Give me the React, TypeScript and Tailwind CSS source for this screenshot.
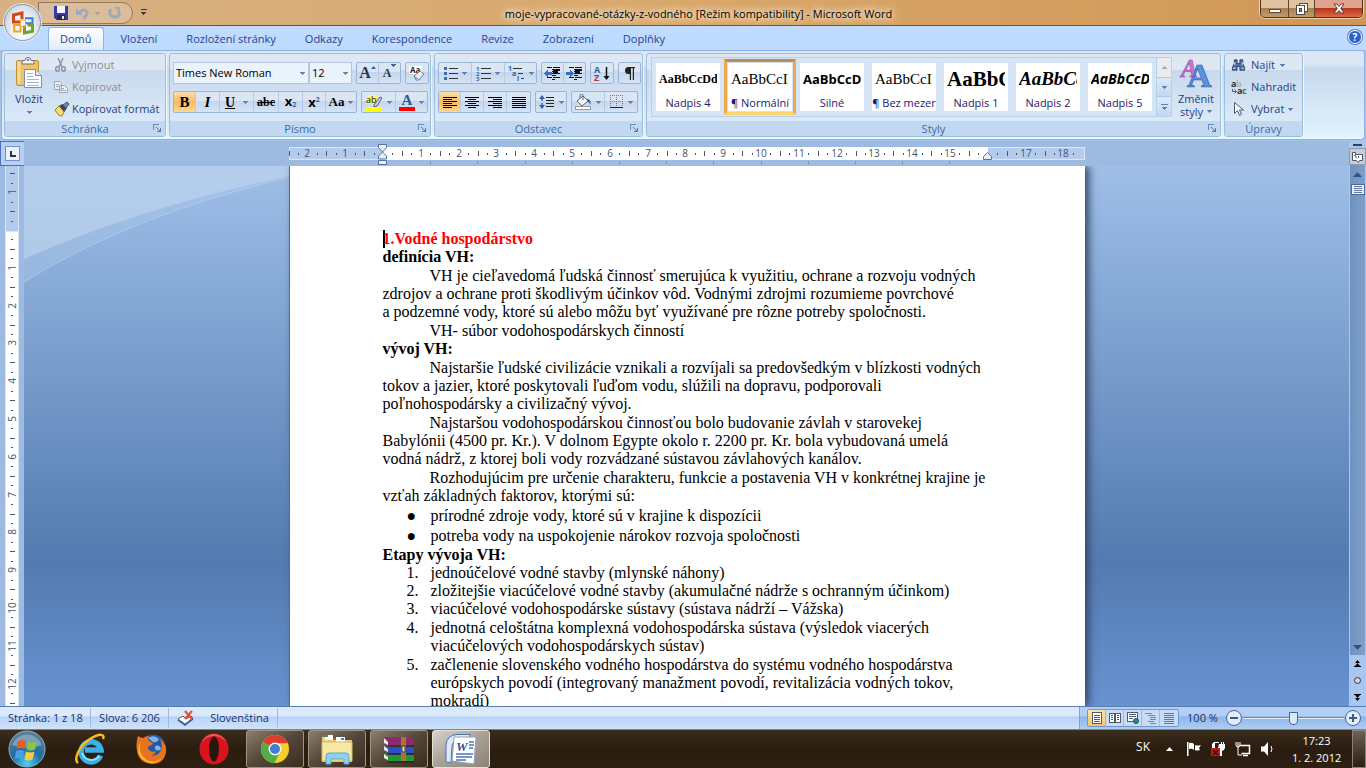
import type { ReactNode } from 'react';

const UI = "font-['Open_Sans','Noto_Sans',sans-serif]";
const SERIF = "font-['Liberation_Serif',serif]";

const TABS = ['Domů', 'Vložení', 'Rozložení stránky', 'Odkazy', 'Korespondence', 'Revize', 'Zobrazení', 'Doplňky'];

const STYLES = [
  { name: 'Nadpis 4',   sample: 'AaBbCcDd', look: "font-['Liberation_Serif',serif] font-bold text-[12px]" },
  { name: '¶ Normální', sample: 'AaBbCcI',  look: "font-['Liberation_Serif',serif] text-[15px]" },
  { name: 'Silné',      sample: 'AaBbCcD',  look: "font-['Open_Sans',sans-serif] font-bold text-[13px]" },
  { name: '¶ Bez mezer', sample: 'AaBbCcI', look: "font-['Liberation_Serif',serif] text-[15px]" },
  { name: 'Nadpis 1',   sample: 'AaBbCc',   look: "font-['Liberation_Serif',serif] font-bold text-[21px]" },
  { name: 'Nadpis 2',   sample: 'AaBbCc',   look: "font-['Liberation_Serif',serif] font-bold italic text-[19px]" },
  { name: 'Nadpis 5',   sample: 'AaBbCcD',  look: "font-['Open_Sans',sans-serif] font-bold italic text-[14px]" },
];

function Caret({ className = 'fill-[#6181b0]' }: { className?: string }) {
  return (
    <svg width="5" height="3" viewBox="0 0 5 3" shapeRendering="crispEdges" className={`shrink-0 ${className}`}>
      <path d="M0 0h5v1H4v1H3v1H2V2H1V1H0z" />
    </svg>
  );
}

/* ---------- ribbon pieces ---------- */

function Launcher({ label }: { label: string }) {
  return (
    <button type="button" aria-label={label} className="absolute right-1 bottom-1">
      <svg width="8" height="8" viewBox="0 0 8 8" shapeRendering="crispEdges" fill="none" stroke="#668eb8">
        <path d="M.5 6V.5H6" />
        <path d="M3 3l4 4M7.5 3.500V7.500H3.500" stroke="#54779f" />
      </svg>
    </button>
  );
}

function Group({ title, width, launcher = true, children }: { title: string; width: string; launcher?: boolean; children: ReactNode }) {
  return (
    <section
      aria-label={title}
      className={`relative flex h-[84px] shrink-0 flex-col overflow-hidden rounded-[3px] border border-[#9dbfdb] bg-linear-to-b from-[#dee8f5] from-20% via-[#c9d9ed] via-20% to-[#d9e9f8] to-80% shadow-[1px_1px_0_#eef6fd] ${width}`}
    >
      <div className="min-h-0 flex-1">{children}</div>
      <div className="h-[15px] bg-[#c1d8f0] text-center text-[11px] leading-[16px] text-[#3e6aaa]">{title}</div>
      {launcher && <Launcher label={`${title} – možnosti`} />}
    </section>
  );
}

function Cluster({ children }: { children: ReactNode }) {
  return (
    <div className="flex h-[22px] divide-x divide-[#b3cbe8] rounded-[2px] border border-[#9ab5d8] bg-linear-to-b from-[#dbe6f4] from-45% via-[#c4d6ed] via-45% to-[#d5e4f5]">
      {children}
    </div>
  );
}

function Tool({ label, width, active = false, caret = false, children }: { label: string; width: string; active?: boolean; caret?: boolean; children: ReactNode }) {
  return (
    <button
      type="button"
      aria-label={label}
      aria-pressed={active}
      className={`flex h-5 items-center justify-center gap-1 ${width} ${active ? 'bg-linear-to-b from-[#fbdfae] via-[#fbb860] to-[#fdd98f]' : ''}`}
    >
      {children}
      {caret && <Caret />}
    </button>
  );
}

function Lines({ rows }: { rows: [number, number][] }) {
  return (
    <svg width="14" height="11" viewBox="0 0 14 11" shapeRendering="crispEdges" stroke="#000">
      {rows.map(([x1, x2], i) => (
        <path key={i} d={`M${x1} ${i * 2 + 0.5}H${x2}`} />
      ))}
    </svg>
  );
}

function IndentIcon({ right = false }: { right?: boolean }) {
  return (
    <svg width="17" height="13" viewBox="0 0 17 13" shapeRendering="crispEdges">
      <path d="M3 .5h5M9 .5h7M8 2.500h8M8 4.500h6M8 6.500h8M8 8.500h4M3 10.500h5M9 10.500h7M8 12.500h3" stroke="#111" />
      <path d="M9 3.500h7M9 5.500h5" stroke="#111" />
      <path d={right ? 'M0 5h4V3l4 3.500L4 10V8H0z' : 'M8 5H4V3L0 6.500 4 10V8h4z'} fill="#3a6fc0" />
    </svg>
  );
}

function Clipboard() {
  return (
    <div className="flex h-full text-[11px] text-[#1e3f7d]">
      <button type="button" className="flex w-12 shrink-0 flex-col items-center pt-[3px]">
        <svg width="28" height="32" viewBox="0 0 28 32">
          <rect x="1.500" y="3.500" width="22" height="25" rx="1.500" fill="#f0c168" stroke="#c28f36" />
          <path d="M2.500 27V5h3v22z" fill="#f8d993" />
          <path d="M7 7V3.500h3a3 3 0 0 1 6 0h3V7z" fill="#eef1f6" stroke="#6c7480" />
          <circle cx="13" cy="3" r="1" fill="#5d6673" />
          <path d="M9.500 12.500h11l6 6v12h-17z" fill="#fdfeff" stroke="#7b8da8" />
          <path d="M20.500 12.500v6h6" fill="#dbe6f4" stroke="#7b8da8" />
          <path d="M12 16.500h6M12 19.500h6M12 22.500h12M12 25.500h12M12 28.500h12" stroke="#9fb4d1" />
        </svg>
        <span className="mt-[2px] leading-4">Vložit</span>
        <span className="mt-1"><Caret /></span>
      </button>
      <div className="flex flex-col pl-px">
        <button type="button" disabled className="flex h-[22px] items-center gap-[2px] text-[#8d8d8d]">
          <svg width="16" height="16" viewBox="0 0 16 16" fill="none" stroke="#8795a9">
            <path d="M4 1l4 9M9 1L5 10" strokeWidth="1.500" />
            <ellipse cx="3.500" cy="12" rx="1.800" ry="2.200" strokeWidth="1.500" />
            <ellipse cx="9.500" cy="12" rx="1.800" ry="2.200" strokeWidth="1.500" />
          </svg>
          Vyjmout
        </button>
        <button type="button" disabled className="flex h-[22px] items-center gap-[2px] text-[#8d8d8d]">
          <svg width="16" height="16" viewBox="0 0 16 16" fill="#edf1f6" stroke="#9aa5b5">
            <path d="M.5 2.500h5l2 2v6h-7zM5.500 6.500h5l3 3v4h-8z" />
            <path d="M2 5.500h3M2 7.500h3M7 9.500h3M7 11.500h5" />
          </svg>
          Kopírovat
        </button>
        <button type="button" className="flex h-[22px] items-center gap-[2px]">
          <svg width="16" height="16" viewBox="0 0 16 16">
            <path d="M1 9l4-4 6 4-3 6-3-.5z" fill="#f4dc74" stroke="#a48424" />
            <path d="M5 5l3-2 5 4-3 4z" fill="#3e4656" />
            <path d="M9 4l4-3 2 2-3 4z" fill="#7486b4" stroke="#3d4d7c" />
          </svg>
          <span className="whitespace-nowrap">Kopírovat formát</span>
        </button>
      </div>
    </div>
  );
}

function FontTools() {
  return (
    <div className="flex flex-col gap-[7px] px-[3px] pt-2">
      <div className="flex gap-1">
        <div className="flex h-[22px]">
          <label className="relative flex items-center">
            <select aria-label="Písmo" className="h-[22px] w-[136px] appearance-none border border-[#b3c7e1] bg-[#eaf2fb] pl-[2px] text-[11px] text-black">
              <option>Times New Roman</option>
            </select>
            <span className="pointer-events-none absolute right-1"><Caret /></span>
          </label>
          <label className="relative flex items-center">
            <select aria-label="Velikost písma" className="h-[22px] w-[43px] appearance-none border border-[#b3c7e1] bg-[#eaf2fb] pl-[2px] text-[11px] text-black">
              <option>12</option>
            </select>
            <span className="pointer-events-none absolute right-1"><Caret /></span>
          </label>
        </div>
        <Cluster>
          <Tool label="Zvětšit písmo" width="w-[22px]">
            <span className={`${SERIF} flex text-[16px] leading-4 font-bold text-[#23374f]`}>
              A<svg width="5" height="3" viewBox="0 0 5 3" className="mt-px fill-[#2f62b5]"><path d="M2.500 0L5 3H0z" /></svg>
            </span>
          </Tool>
          <Tool label="Zmenšit písmo" width="w-[21px]">
            <span className={`${SERIF} flex text-[12px] leading-5 font-bold text-[#23374f]`}>
              A<Caret className="mt-px fill-[#2f62b5]" />
            </span>
          </Tool>
        </Cluster>
        <Cluster>
          <Tool label="Vymazat formátování" width="w-[22px]">
            <svg width="18" height="16" viewBox="0 0 18 16" className="overflow-visible">
              <rect x="1" y="1" width="13" height="8" fill="#fff" />
              <text x="2" y="8" fontSize="8" fontWeight="bold" fontFamily="Open Sans" fill="#222">Aa</text>
              <path d="M6 11l6-5 4 3-5 6H8z" fill="#e9eef7" stroke="#6c7fa2" />
              <path d="M6 11l4 3" stroke="#6c7fa2" />
            </svg>
          </Tool>
        </Cluster>
      </div>
      <div className="flex gap-1">
        <Cluster>
          <Tool label="Tučné" width="w-[22px]" active><span className={`${SERIF} text-[15px] font-bold`}>B</span></Tool>
          <Tool label="Kurzíva" width="w-[24px]"><span className={`${SERIF} text-[15px] font-bold italic`}>I</span></Tool>
          <Tool label="Podtržené" width="w-[34px]" caret><span className={`${SERIF} pr-1 text-[14px] font-bold underline`}>U</span></Tool>
          <Tool label="Přeškrtnuté" width="w-[25px]"><span className={`${SERIF} text-[12px] font-bold line-through`}>abc</span></Tool>
          <Tool label="Dolní index" width="w-[24px]">
            <span className="flex text-[13px] leading-4 font-bold">x<span className="pt-[6px] text-[7px] leading-3 text-[#2f62b5]">2</span></span>
          </Tool>
          <Tool label="Horní index" width="w-[23px]">
            <span className="flex text-[13px] leading-4 font-bold">x<span className="text-[7px] leading-3 text-[#2f62b5]">2</span></span>
          </Tool>
          <Tool label="Velká písmena" width="w-[30px]" caret><span className={`${SERIF} text-[13px] font-bold`}>Aa</span></Tool>
        </Cluster>
        <Cluster>
          <Tool label="Barva zvýraznění textu" width="w-[34px]" caret>
            <svg width="17" height="17" viewBox="0 0 17 17" className="overflow-visible">
              <rect x="1" y="1" width="10" height="9" fill="#fff36b" />
              <text x="0" y="9" fontSize="9" fontFamily="Open Sans" fill="#111">ab</text>
              <path d="M8 11l6-8 2 1-5 8-3 1z" fill="#c9d3e4" stroke="#4f5f7c" />
              <rect x="0" y="13" width="16" height="4" fill="#ff0" />
            </svg>
          </Tool>
          <Tool label="Barva písma" width="w-[31px]" caret>
            <span className="flex flex-col items-center">
              <span className={`${SERIF} text-[15px] leading-[13px] font-bold text-[#31558f]`}>A</span>
              <span className="h-1 w-4 bg-[#f00]" />
            </span>
          </Tool>
        </Cluster>
      </div>
    </div>
  );
}

function ParagraphTools() {
  return (
    <div className="flex flex-col gap-[7px] px-[3px] pt-2">
      <div className="flex gap-1">
        <Cluster>
          <Tool label="Odrážky" width="w-[33px]" caret>
            <svg width="14" height="13" viewBox="0 0 14 13" shapeRendering="crispEdges">
              <path d="M0 0h3v3H0zM0 5h3v3H0zM0 10h3v3H0z" fill="#4068b0" />
              <path d="M5 1.500h9M5 6.500h9M5 11.500h9" stroke="#333" />
            </svg>
          </Tool>
          <Tool label="Číslování" width="w-[33px]" caret>
            <svg width="15" height="15" viewBox="0 0 15 15" className="overflow-visible">
              <g fontSize="6" fontWeight="bold" fontFamily="Open Sans" fill="#2f62b5">
                <text x="0" y="5">1</text><text x="0" y="10">2</text><text x="0" y="15">3</text>
              </g>
              <path d="M5 2.500h10M5 7.500h10M5 12.500h10" stroke="#333" shapeRendering="crispEdges" />
            </svg>
          </Tool>
          <Tool label="Víceúrovňový seznam" width="w-[31px]" caret>
            <svg width="17" height="15" viewBox="0 0 17 15" className="overflow-visible">
              <g fontSize="7" fontWeight="bold" fontFamily="Open Sans" fill="#2f62b5">
                <text x="0" y="5">1</text><text x="4" y="10">a</text><text x="9" y="15">i</text>
              </g>
              <path d="M5 2.500h9M10 7.500h5M13 12.500h3" stroke="#333" shapeRendering="crispEdges" />
            </svg>
          </Tool>
        </Cluster>
        <Cluster>
          <Tool label="Zmenšit odsazení" width="w-[22px]"><IndentIcon /></Tool>
          <Tool label="Zvětšit odsazení" width="w-[21px]"><IndentIcon right /></Tool>
        </Cluster>
        <Cluster>
          <Tool label="Seřadit" width="w-[22px]">
            <svg width="16" height="17" viewBox="0 0 16 17" className="overflow-visible">
              <text x="0" y="8" fontSize="9" fontWeight="bold" fontFamily="Open Sans" fill="#2f62b5">A</text>
              <text x="0" y="16" fontSize="9" fontWeight="bold" fontFamily="Open Sans" fill="#a33a4a">Z</text>
              <path d="M12.500 2v12" stroke="#111" strokeWidth="1.500" /><path d="M9.500 11h6l-3 4z" fill="#111" />
            </svg>
          </Tool>
        </Cluster>
        <Cluster>
          <Tool label="Zobrazit vše" width="w-[21px]">
            <svg width="11" height="13" viewBox="0 0 11 13" fill="#222">
              <path d="M5 0h6v1.200H10V13H8.800V1.200H7V13H5.800V7H4.500a3.500 3.500 0 0 1 0-7z" />
            </svg>
          </Tool>
        </Cluster>
      </div>
      <div className="flex gap-1">
        <Cluster>
          <Tool label="Zarovnat vlevo" width="w-[22px]" active><Lines rows={[[0, 14], [0, 9], [0, 14], [0, 9], [0, 14], [0, 9]]} /></Tool>
          <Tool label="Na střed" width="w-[23px]"><Lines rows={[[0, 14], [3, 11], [0, 14], [3, 11], [0, 14], [3, 11]]} /></Tool>
          <Tool label="Zarovnat vpravo" width="w-[23px]"><Lines rows={[[0, 14], [5, 14], [0, 14], [5, 14], [0, 14], [5, 14]]} /></Tool>
          <Tool label="Do bloku" width="w-[23px]"><Lines rows={[[0, 14], [0, 14], [0, 14], [0, 14], [0, 14], [0, 14]]} /></Tool>
        </Cluster>
        <Cluster>
          <Tool label="Řádkování" width="w-[30px]" caret>
            <svg width="16" height="16" viewBox="0 0 16 16">
              <path d="M3 1l3 4H0zM3 15l3-4H0z" fill="#2f62b5" /><path d="M3 4v3M3 9v3" stroke="#2f62b5" strokeWidth="1.500" />
              <path d="M7 3.500h8M7 6.500h8M7 9.500h8M7 12.500h8" stroke="#222" shapeRendering="crispEdges" />
            </svg>
          </Tool>
        </Cluster>
        <Cluster>
          <Tool label="Stínování" width="w-[33px]" caret>
            <svg width="17" height="16" viewBox="0 0 17 16">
              <path d="M2 7l6-5 5 5-6 5z" fill="#f6f8fb" stroke="#536483" />
              <path d="M8 6V1.500a1.500 1.500 0 0 0-3 0V4" fill="none" stroke="#536483" />
              <path d="M12 5c3 0 4 2 3.500 6-1-2-1.500-3-3-3z" fill="#3366b8" />
              <rect x=".5" y="12.500" width="15" height="3" fill="#fff" stroke="#9a9a9a" />
            </svg>
          </Tool>
          <Tool label="Ohraničení" width="w-[32px]" caret>
            <svg width="14" height="14" viewBox="0 0 14 14" shapeRendering="crispEdges" fill="none" stroke="#777" strokeDasharray="1 1">
              <path d="M0 .5h13M.5 0v13M12.500 0v13M6.500 0v13M0 6.500h13" />
              <path d="M0 12.500h13" stroke="#222" strokeDasharray="none" />
            </svg>
          </Tool>
        </Cluster>
      </div>
    </div>
  );
}

function StyleGallery() {
  return (
    <div className="flex pt-[3px] pl-1">
      <div className="flex h-[60px] shrink-0 border border-[#b9d0ed] bg-[#d6e5f6]">
        {STYLES.map((s, i) => {
          const active = i === 1;
          return (
            <button
              key={s.name}
              type="button"
              aria-pressed={active}
              className={`my-px flex w-[72px] shrink-0 rounded-[2px] border-[3px] ${active ? 'border-t-[#c28a4e] border-r-[#efa94a] border-b-[#f8d66c] border-l-[#efa94a]' : 'border-transparent'}`}
            >
              <span className="mx-px my-px flex h-[48px] w-16 flex-col bg-white">
                <span className={`mx-[3px] block h-8 overflow-hidden text-left leading-8 whitespace-nowrap text-black ${s.look}`}>{s.sample}</span>
                <span className="text-center text-[11px] leading-[15px] whitespace-nowrap text-[#1b1b70]">{s.name}</span>
              </span>
            </button>
          );
        })}
        <div className="flex w-[15px] flex-col border-l border-[#b9d0ed]">
          <button type="button" aria-label="Předchozí řádek" className="flex flex-1 items-center justify-center bg-[#e9ebee]">
            <span className="rotate-180"><Caret className="fill-[#a9acb1]" /></span>
          </button>
          <button type="button" aria-label="Další řádek" className="flex flex-1 items-center justify-center border-y border-[#a9c4e5] bg-linear-to-b from-[#dce9f8] to-[#c3d8f1]"><Caret /></button>
          <button type="button" aria-label="Více" className="flex flex-1 flex-col items-center justify-center gap-[2px] bg-linear-to-b from-[#dce9f8] to-[#c3d8f1]">
            <span className="h-px w-[7px] bg-[#6181b0]" /><Caret />
          </button>
        </div>
      </div>
      <button type="button" className="flex flex-1 flex-col items-center pt-px text-[11px] leading-[13px] text-[#1e3f7d]">
        <svg width="32" height="31" viewBox="0 0 32 31" className="overflow-visible">
          <text x="1" y="19" fontSize="25" fontStyle="italic" fontWeight="bold" fontFamily="Liberation Serif" fill="#c978cf" stroke="#8b3f9b" strokeWidth=".5">A</text>
          <text x="7" y="29" fontSize="34" fontFamily="Liberation Serif" fontWeight="bold" fill="#5b93dc" stroke="#2e62ad" strokeWidth=".7">A</text>
        </svg>
        <span className="mt-[3px]">Změnit</span>
        <span className="flex items-center gap-1">styly<Caret /></span>
      </button>
    </div>
  );
}

function Editing() {
  return (
    <div className="flex flex-col pl-[6px] text-[11px] text-[#1e3f7d]">
      <button type="button" className="flex h-[22px] items-center gap-[5px]">
        <svg width="15" height="14" viewBox="0 0 16 14" fill="#4d6fa6" stroke="#26446f">
          <path d="M3.500 1.500h3v4h3v-4h3v4l2 4v3h-5v-4h-3v4h-5v-3l2-4z" />
          <path d="M2 10.500h3M11 10.500h3M4 4v3M12 4v3" stroke="#d8e4f4" />
        </svg>
        Najít <Caret />
      </button>
      <button type="button" className="flex h-[22px] items-center gap-1">
        <svg width="16" height="16" viewBox="0 0 16 16" fontFamily="Open Sans" fontWeight="bold" fontSize="9" className="overflow-visible">
          <text x="0" y="8" fill="#333">a</text><text x="5" y="8" fill="#aab2bd">b</text>
          <text x="6" y="15" fill="#333">a</text><text x="11" y="15" fill="#2d8a34">c</text>
          <path d="M1.500 10v2.500H5M3.500 10.500l2 2-2 2" fill="none" stroke="#2f62b5" />
        </svg>
        Nahradit
      </button>
      <button type="button" className="flex h-[22px] items-center gap-1">
        <svg width="16" height="16" viewBox="0 0 16 16"><path d="M3.500 1.500v11l3-3 2 5 2-1-2-4.500h4z" fill="#fff" stroke="#4a5a76" /></svg>
        Vybrat <Caret />
      </button>
    </div>
  );
}

/* ---------- window chrome ---------- */

function OfficeButton() {
  return (
    <button type="button" aria-label="Tlačítko Office" className="absolute top-1 left-1 z-10 flex size-[37px] items-center justify-center rounded-full border border-[#8e9aae] bg-radial-[at_50%_75%] from-white via-[#e9ecf2] to-[#b9c2d2] shadow-[0_0_0_1px_#dfe6f2]">
      <svg width="24" height="24" viewBox="0 0 24 24" fill="none" strokeWidth="3">
        <path d="M9.500 11H2.500V4L11 2v6" stroke="#d2491b" />
        <path d="M14 7.200h7.500v5H15" stroke="#3c7fd0" strokeWidth="2" />
        <path d="M9.500 14H3.200v6.500h6.300v-5" stroke="#efa51b" strokeWidth="2" />
        <path d="M13.500 14.500V22l8-1.700V14h-5" stroke="#6aa52c" />
        <path d="M9.500 9h5M14.500 9v6M9.500 9.500v6M10 15.500h5" stroke="#f0a13a" strokeWidth="1" />
      </svg>
    </button>
  );
}

function TitleBar() {
  return (
    <header className="flex h-[26px] shrink-0 items-start border-b border-[#6d5334] bg-linear-to-r from-[#d6b184] via-[#d9a769] to-[#cf9757]">
      <div className="flex items-start pt-[2px] pl-[38px]">
        <div className="flex h-[22px] w-[95px] items-center rounded-r-full border border-[#8f7a5f] bg-[#dbc3a4]/70 pl-[15px]">
          <button type="button" aria-label="Uložit">
            <svg width="14" height="14" viewBox="0 0 14 14" shapeRendering="crispEdges">
              <path d="M0 0h14v14H2l-2-2z" fill="#3a39a8" />
              <path d="M3 0h8v7H3z" fill="#f3f5fb" /><path d="M3 9h8v5H3z" fill="#222a55" /><path d="M8 10h2v3H8z" fill="#e5e8f2" />
            </svg>
          </button>
          <button type="button" aria-label="Zpět" className="ml-2 flex items-center gap-[6px]">
            <svg width="13" height="13" viewBox="0 0 13 13" fill="none" stroke="#9fa9bd" strokeWidth="3">
              <path d="M4 5c4-4 8-1 7 2-.5 2-2 3-4 4.500" /><path d="M0 1v7h7z" fill="#9fa9bd" stroke="none" />
            </svg>
            <Caret className="fill-[#a79f97]" />
          </button>
          <button type="button" aria-label="Znovu" className="ml-2">
            <svg width="13" height="13" viewBox="0 0 13 13" fill="none" stroke="#9fa9bd" strokeWidth="3">
              <path d="M3 2c-3 4 0 8 4 8 5 0 5-4 3-6" /><path d="M6 0h6v6z" fill="#9fa9bd" stroke="none" />
            </svg>
          </button>
        </div>
        <button type="button" aria-label="Přizpůsobit panel" className="mt-[7px] ml-[7px] flex w-[7px] flex-col items-center gap-[2px]">
          <span className="h-px w-[6px] bg-[#2b3c5c]" /><Caret className="fill-[#2b3c5c]" />
        </button>
      </div>
      <h1 className="flex-1 pr-[10px] text-center text-[11px] leading-[27px] text-black [text-shadow:0_0_6px_#fff,0_0_8px_#f8e6cc,0_0_12px_#f8e6cc]">
        moje-vypracované-otázky-z-vodného [Režim kompatibility] - Microsoft Word
      </h1>
      <div className="mr-[3px] flex h-[18px] overflow-hidden rounded-b-[5px] border border-t-0 border-[#4e3624] shadow-[0_0_0_1px_#e9cda5]">
        <button type="button" aria-label="Minimalizovat" className="flex w-[28px] items-end justify-center border-r border-[#5c4630] bg-linear-to-b from-[#dfc3a1] from-50% via-[#a8804f] via-50% to-[#c49a68] pb-1">
          <span className="h-1 w-3 border border-[#4e4a48] bg-white" />
        </button>
        <button type="button" aria-label="Obnovit" className="flex w-[26px] items-center justify-center border-r border-[#5c4630] bg-linear-to-b from-[#dfc3a1] from-50% via-[#a8804f] via-50% to-[#c49a68]">
          <svg width="12" height="12" viewBox="0 0 12 12" fill="#fff" stroke="#4e4a48" shapeRendering="crispEdges">
            <path d="M3.500.5h8v8h-8z" /><path d="M.5 2.500h8v9h-8z" /><path d="M3.500 5.500h2v3h-2z" fill="#a8804f" />
          </svg>
        </button>
        <button type="button" aria-label="Zavřít" className="flex w-[47px] items-center justify-center bg-linear-to-b from-[#e0a18d] from-50% via-[#b8341a] via-50% to-[#dc6a43]">
          <svg width="12" height="11" viewBox="0 0 12 11">
            <path d="M1 1h3l2 2.500L8 1h3L7.800 5.500 11 10H8L6 7.500 4 10H1l3.200-4.500z" fill="#fff" stroke="#5b3a36" />
          </svg>
        </button>
      </div>
    </header>
  );
}

function TabRow() {
  return (
    <nav className="flex h-6 shrink-0 items-end bg-[#bfdbff] pl-12">
      {TABS.map((t, i) => (
        <button
          key={t}
          type="button"
          className={`h-[23px] shrink-0 px-[11px] text-[11px] leading-[22px] text-[#1e4395] ${i === 0 ? 'mr-[6px] rounded-t-[3px] border border-b-0 border-[#8db2e3] bg-linear-to-b from-white to-[#e0ebf9]' : 'mr-[7px]'}`}
        >
          {t}
        </button>
      ))}
      <button type="button" aria-label="Nápověda" className="mr-1 mb-[6px] ml-auto flex size-[14px] items-center justify-center rounded-full border border-white bg-[#2c62d0] text-[10px] leading-none font-bold text-white shadow-[0_0_0_1px_#5a7fc4]">
        ?
      </button>
    </nav>
  );
}

function Ribbon() {
  return (
    <div className="flex h-[91px] shrink-0 bg-[#a5c3e8] px-px pb-px">
      <div className="flex flex-1 gap-[3px] rounded-[4px] border border-[#8db2e3] bg-linear-to-b from-[#dbe7f5] from-15% via-[#c8d9ee] via-20% to-[#e2f3fd] pt-[2px] pl-[2px] shadow-[inset_0_-2px_0_#e4f8ff]">
        <Group title="Schránka" width="w-[162px]"><Clipboard /></Group>
        <Group title="Písmo" width="w-[262px]"><FontTools /></Group>
        <Group title="Odstavec" width="w-[209px]"><ParagraphTools /></Group>
        <Group title="Styly" width="w-[575px]"><StyleGallery /></Group>
        <Group title="Úpravy" width="w-[79px]" launcher={false}><Editing /></Group>
      </div>
    </div>
  );
}

/* ---------- rulers ---------- */

const CM = 37.8;

function HorizontalRuler() {
  const zero = 94;
  const ticks = [];
  for (let q = -10; q <= 74; q++) {
    const x = Math.round(zero + (q * CM) / 4);
    const n = Math.abs(q / 4);
    if (x < 0 || x > 792 || q === 0 || n === 16) continue;
    if (q % 4 === 0) ticks.push(<text key={q} x={x} y="16" textAnchor="middle">{n}</text>);
    else if (q % 2 === 0) ticks.push(<path key={q} d={`M${x}.5 10v5`} />);
    else ticks.push(<path key={q} d={`M${x}.5 12v2`} />);
  }
  return (
    <svg width="796" height="25" viewBox="0 0 796 25" className="mx-auto block" fontSize="10" fontFamily="Open Sans" fill="#44546d">
      <rect x=".5" y="6.500" width="795" height="12" fill="#b4cbeb" stroke="#d7e6f8" />
      <rect x="94" y="6" width="605" height="13" fill="#fff" />
      <g stroke="#4c566b" strokeWidth="1" shapeRendering="crispEdges" className="[&_text]:stroke-none">{ticks}</g>
      <g stroke="#7d93b5" shapeRendering="crispEdges">
        {Array.from({ length: 12 }, (_, i) => <path key={i} d={`M${Math.round(zero + (i + 1) * 47.2)}.5 20v3`} />)}
      </g>
      <g fill="#e8f0fa" stroke="#5472a3">
        <path d="M89.500 3.500h8v3l-4 4.500-4-4.500zM93.500 11l4 4v3h-8v-3zM89.500 19.500h8v4h-8z" />
        <path d="M698.500 11.500l4 4v3h-8v-3z" />
      </g>
    </svg>
  );
}

function VerticalRuler() {
  const zero = 64;
  const marks = [];
  for (let q = -6; q <= 50; q++) {
    const y = Math.round(zero + (q * CM) / 4);
    if (q === 0 || y > 540) continue;
    if (q % 4 === 0) marks.push(<text key={q} transform={`translate(16 ${y}) rotate(-90)`} textAnchor="middle">{Math.abs(q / 4)}</text>);
    else if (q % 2 === 0) marks.push(<path key={q} d={`M10 ${y}.5h5`} />);
    else marks.push(<path key={q} d={`M11 ${y}.5h2`} />);
  }
  return (
    <svg width="24" height="540" viewBox="0 0 24 540" className="block" fontSize="10" fontFamily="Open Sans" fill="#44546d">
      <rect x="5" y="0" width="14" height="540" fill="#d7e6f8" />
      <rect x="6" y="0" width="12" height="65" fill="#b4cbeb" />
      <rect x="6" y="66" width="12" height="474" fill="#fff" />
      <g stroke="#4c566b" shapeRendering="crispEdges" className="[&_text]:stroke-none">{marks}</g>
    </svg>
  );
}

/* ---------- document ---------- */

function Para({ children }: { children: ReactNode }) {
  return <p className="mt-px indent-[47px]">{children}</p>;
}

function Item({ marker, className = '', children }: { marker: string; className?: string; children: ReactNode }) {
  return (
    <li className={`flex pl-6 ${className}`}>
      <span className="w-6 shrink-0">{marker}</span>
      <span>{children}</span>
    </li>
  );
}

function Page() {
  return (
    <article className={`relative mx-auto h-full w-[796px] border-l border-[#5b6b82] bg-white pt-16 pl-[93px] text-[16px] leading-[18px] whitespace-nowrap text-black shadow-[4px_0_8px_#33496b] ${SERIF}`}>
      <h2 className="font-bold text-[#f00]">
        <span className="-mr-[2px] inline-block h-[18px] w-[2px] bg-black align-top" />1.Vodné hospodárstvo
      </h2>
      <h3 className="font-bold">definícia VH:</h3>
      <Para>
        VH je cieľavedomá ľudská činnosť smerujúca k využitiu, ochrane a rozvoju vodných<br />
        zdrojov a ochrane proti škodlivým účinkov vôd. Vodnými zdrojmi rozumieme povrchové<br />
        a podzemné vody, ktoré sú alebo môžu byť využívané pre rôzne potreby spoločnosti.
      </Para>
      <Para>VH- súbor vodohospodárskych činností</Para>
      <h3 className="font-bold">vývoj VH:</h3>
      <Para>
        Najstaršie ľudské civilizácie vznikali a rozvíjali sa predovšedkým v blízkosti vodných<br />
        tokov a jazier, ktoré poskytovali ľuďom vodu, slúžili na dopravu, podporovali<br />
        poľnohospodársky a civilizačný vývoj.
      </Para>
      <Para>
        Najstaršou vodohospodárskou činnosťou bolo budovanie závlah v starovekej<br />
        Babylónii (4500 pr. Kr.). V dolnom Egypte okolo r. 2200 pr. Kr. bola vybudovaná umelá<br />
        vodná nádrž, z ktorej boli vody rozvádzané sústavou závlahových kanálov.
      </Para>
      <Para>
        Rozhodujúcim pre určenie charakteru, funkcie a postavenia VH v konkrétnej krajine je<br />
        vzťah základných faktorov, ktorými sú:
      </Para>
      <ul className="mt-px leading-5">
        <Item marker="●">prírodné zdroje vody, ktoré sú v krajine k dispozícii</Item>
        <Item marker="●">potreba vody na uspokojenie nárokov rozvoja spoločnosti</Item>
      </ul>
      <h3 className="font-bold">Etapy vývoja VH:</h3>
      <ol>
        <Item marker="1.">jednoúčelové vodné stavby (mlynské náhony)</Item>
        <Item marker="2.">zložitejšie viacúčelové vodné stavby (akumulačné nádrže s ochranným účinkom)</Item>
        <Item marker="3.">viacúčelové vodohospodárske sústavy (sústava nádrží – Vážska)</Item>
        <Item marker="4." className="mt-px">
          jednotná celoštátna komplexná vodohospodárska sústava (výsledok viacerých<br />
          viacúčelových vodohospodárskych sústav)
        </Item>
        <Item marker="5." className="mt-px">
          začlenenie slovenského vodného hospodárstva do systému vodného hospodárstva<br />
          európskych povodí (integrovaný manažment povodí, revitalizácia vodných tokov,<br />
          mokradí)
        </Item>
      </ol>
    </article>
  );
}

function ScrollBar() {
  return (
    <aside className="flex w-[17px] shrink-0 flex-col items-center bg-[#a9c6f0] pt-[3px]">
      <div className="h-[2px] w-[9px] bg-[#2f4269]" />
      <button type="button" aria-label="Pravítko" className="mt-[2px] flex size-[17px] items-center justify-center border border-[#8f9bb0] bg-[#c9ccd3]">
        <svg width="13" height="12" viewBox="0 0 13 12" fill="#fff" stroke="#4a566d">
          <path d="M1.500 1.500h3v2h7v6h-3l-1 2-2-2h-4z" /><path d="M5 5v2M7.500 5v2M3 4l2 1" />
        </svg>
      </button>
      <div className="flex w-[15px] flex-1 flex-col items-center bg-linear-to-r from-[#6f92bf] to-[#7fa0cb]">
        <button type="button" aria-label="Nahoru" className="flex h-[19px] items-center">
          <svg width="9" height="5" viewBox="0 0 9 5" fill="#35507f"><path d="M4.500 0L9 5H0z" /></svg>
        </button>
        <div className="flex h-[11px] w-[14px] flex-col items-center justify-center gap-px border border-[#4f6c9a] bg-[#e6eef9]">
          {[0, 1, 2, 3].map((n) => <span key={n} className="h-px w-2 bg-[#6a7d9c]" />)}
        </div>
        <button type="button" aria-label="Dolů" className="mt-auto flex h-4 items-center">
          <svg width="9" height="5" viewBox="0 0 9 5" fill="#35507f"><path d="M0 0h9L4.500 5z" /></svg>
        </button>
      </div>
      <div className="flex h-[51px] flex-col items-center justify-around">
        <button type="button" aria-label="Předchozí stránka">
          <svg width="7" height="7" viewBox="0 0 7 7"><path d="M3.500 0L6 3H1zM3.500 3L6 6H1zM0 6h7v1H0z" /></svg>
        </button>
        <button type="button" aria-label="Vybrat objekt" className="size-[7px] rounded-full border border-[#333] bg-[#d5d5d5]" />
        <button type="button" aria-label="Další stránka">
          <svg width="7" height="7" viewBox="0 0 7 7"><path d="M0 0h7v1H0zM1 1h5L3.500 4zM1 4h5L3.500 7z" /></svg>
        </button>
      </div>
    </aside>
  );
}

function Workspace() {
  return (
    <main className="flex min-h-0 flex-1 bg-[#9dbae0]">
      <div className="flex w-6 shrink-0 flex-col overflow-hidden">
        <button type="button" aria-label="Tabulátor" className="flex size-[25px] shrink-0 items-center justify-center border border-[#4a72b8] bg-[#b7cff0]">
          <span className="flex size-[15px] items-center justify-center border border-[#7294c9] bg-[#eef3fa]">
            <span className="size-[6px] border-b-2 border-l-2 border-[#26344f]" />
          </span>
        </button>
        <VerticalRuler />
      </div>
      <div className="flex min-w-0 flex-1 flex-col">
        <HorizontalRuler />
        <div className="relative min-h-0 flex-1 overflow-hidden bg-linear-to-b from-[#9fbfe8] via-[#547bb0] via-73% to-[#6793d1]">
          <svg width="265" height="120" viewBox="0 0 265 120" className="absolute top-0 left-0">
            <path d="M0 0h265v11Q105 50 0 116z" fill="#b5d0ec" opacity=".3" />
            <path d="M0 0h265v10Q115 42 0 93z" fill="#c0d6f0" opacity=".6" />
            <path d="M265 11Q105 50 0 116" fill="none" stroke="#bcd4ee" opacity=".6" />
          </svg>
          <Page />
        </div>
      </div>
      <ScrollBar />
    </main>
  );
}

/* ---------- status bar ---------- */

function StatusBar() {
  return (
    <footer className="flex h-[23px] shrink-0 items-center border-t border-[#567db0] bg-linear-to-b from-[#dce9fb] from-40% via-[#b8d3f8] via-45% to-[#cfe2fb] text-[11px] text-[#14316d]">
      <button type="button" className="h-5 w-[91px] border-r border-[#9dbce3] text-left"><span className="pl-2">Stránka: 1 z 18</span></button>
      <button type="button" className="h-5 w-[78px] border-r border-[#9dbce3]">Slova: 6 206</button>
      <button type="button" aria-label="Kontrola pravopisu" className="flex w-[33px] justify-center">
        <svg width="17" height="16" viewBox="0 0 17 16">
          <path d="M1 9l5-3 3 3 5-3 2 2-8 6z" fill="#fff" stroke="#4a6390" /><path d="M1 10l7 5 8-6" fill="none" stroke="#345a9d" strokeWidth="1.500" />
          <path d="M8 1l7 8M15 1L8 9" stroke="#ea4b2c" strokeWidth="2" />
        </svg>
      </button>
      <button type="button" className="h-5 w-[76px] border-r border-[#9dbce3]">Slovenština</button>
      <div className="ml-auto flex h-full items-center border-l border-[#7fa5d8] bg-linear-to-b from-[#b3cff3] from-40% via-[#8fb5e8] via-45% to-[#b0cdf2] pl-[7px]">
        <div className="flex h-[18px] divide-x divide-[#9dbbe2] rounded-[2px] border border-[#6e97cf] bg-[#c7dcf6]">
          {['Rozložení při tisku', 'Čtení', 'Web', 'Osnova', 'Koncept'].map((v, i) => (
            <button key={v} type="button" aria-label={v} className={`flex w-[18px] items-center justify-center ${i === 0 ? 'bg-linear-to-b from-[#fde3ac] to-[#fbc35e]' : ''}`}>
              <svg width="12" height="12" viewBox="0 0 12 12" fill="none" stroke="#4f5a6c" shapeRendering="crispEdges">
                {i === 0 && <><path d="M1.500.5h9v11h-9z" fill="#fff" /><path d="M3 3.500h6M3 5.500h6M3 7.500h6M3 9.500h6" /></>}
                {i === 1 && <><path d="M.5 1.500h5v9h-5zM6.500 1.500h5v9h-5z" fill="#fff" /><path d="M2 3.500h2M2 5.500h2M2 7.500h2M8 3.500h2M8 5.500h2M8 7.500h2" /></>}
                {i === 2 && <><path d="M.5.5h10v9H.5z" fill="#fff" /><path d="M2 2.500h7M2 4.500h7M2 6.500h4" /><circle cx="9" cy="9" r="2.500" fill="#2c8a7a" stroke="#1d5a78" shapeRendering="auto" /></>}
                {i === 3 && <path stroke="#7b8594" d="M0 1.500h7M3 3.500h7M5 5.500h6M5 7.500h6M3 9.500h6M5 11.500h6" />}
                {i === 4 && <path stroke="#6b7687" d="M1 1.500h10M1 3.500h10M1 5.500h10M1 7.500h10M1 9.500h10M1 11.500h10" />}
              </svg>
            </button>
          ))}
        </div>
        <button type="button" className="w-[47px]">100 %</button>
        <button type="button" aria-label="Oddálit" className="flex size-4 items-center justify-center rounded-full border border-[#44669b] bg-[#e2edfb]">
          <span className="h-[2px] w-2 bg-[#44597c]" />
        </button>
        <input
          type="range"
          aria-label="Lupa"
          min={0}
          max={100}
          defaultValue={50}
          className="mx-px h-[14px] w-[101px] appearance-none bg-[linear-gradient(transparent_6px,#5d86bd_6px,#5d86bd_7px,#eaf3ff_7px,#eaf3ff_8px,transparent_8px)] [&::-webkit-slider-thumb]:h-[13px] [&::-webkit-slider-thumb]:w-[9px] [&::-webkit-slider-thumb]:appearance-none [&::-webkit-slider-thumb]:rounded-b-[4px] [&::-webkit-slider-thumb]:border [&::-webkit-slider-thumb]:border-[#44669b] [&::-webkit-slider-thumb]:bg-[#dce8f8]"
        />
        <button type="button" aria-label="Přiblížit" className="mr-[5px] flex size-4 items-center justify-center rounded-full border border-[#44669b] bg-[#e2edfb]">
          <svg width="8" height="8" viewBox="0 0 8 8" fill="#44597c"><path d="M3 0h2v3h3v2H5v3H3V5H0V3h3z" /></svg>
        </button>
      </div>
    </footer>
  );
}

/* ---------- taskbar ---------- */

const RUN = 'flex h-[38px] w-[58px] items-center justify-center rounded-[3px] border';

function TaskBar() {
  return (
    <div className="flex h-[39px] shrink-0 items-center border-t border-[#8b8273] bg-linear-to-b from-[#3a2d1d] via-[#2a1d10] to-[#2e2114] text-white">
      <button type="button" aria-label="Start" className="ml-2 flex w-[38px] justify-center">
        <svg width="38" height="38" viewBox="0 0 38 38">
          <defs>
            <radialGradient id="orb" cx=".5" cy=".9" r=".9">
              <stop offset="0" stopColor="#4fd2f4" /><stop offset=".45" stopColor="#1c6ea6" /><stop offset="1" stopColor="#5d7f95" />
            </radialGradient>
          </defs>
          <circle cx="19" cy="19" r="18" fill="url(#orb)" stroke="#8fb0bf" />
          <path d="M4 15a16 16 0 0 1 30 0q-15 6-30 0z" fill="#fff" opacity=".3" />
          <path d="M10 11q4-2 8 0l-1.500 8q-4-2-8 0z" fill="#ea5b25" />
          <path d="M20 11.500q4 2 9 0l-2 8q-4 2-8.500 0z" fill="#8cc63e" />
          <path d="M8 21q4-2 8 0l-1.500 8q-4-2-8 0z" fill="#4a9fe0" />
          <path d="M18 21.500q4 2 8.500 0l-2 8q-4 2-8 0z" fill="#fbcb3c" />
        </svg>
      </button>
      <button type="button" aria-label="Internet Explorer" className="flex w-[87px] justify-center">
        <svg width="32" height="32" viewBox="0 0 32 32" fill="none">
          <path d="M26.500 22.500A10 10 0 1 1 27 17H11" stroke="#38b0ea" strokeWidth="5.500" />
          <path d="M25.500 23A10 10 0 0 1 8 20" stroke="#8fe0fb" strokeWidth="2" />
          <path d="M4 30C-1 26 6 12 16 6S31 1 29 6" stroke="#f5c021" strokeWidth="2.500" />
        </svg>
      </button>
      <button type="button" aria-label="Firefox" className="flex w-[37px] justify-center">
        <svg width="32" height="32" viewBox="0 0 32 32">
          <circle cx="17" cy="14" r="12.500" fill="#28579f" />
          <path d="M12 5q6-4 11 1-2 4-6 3zM19 13q5-2 6 3-3 3-6 0z" fill="#7fb5e4" />
          <path d="M2 3q3 2 5 2 3-2 6-2-2 3 0 5 2 1 4 2-1 3-4 3-2 2 0 4 3 3 7 1-1 4-5 4 7 2 10-5 2-5-1-11 7 5 6 13-2 12-14 12Q3 30 1 18-.5 10 2 3z" fill="#e9721c" />
          <path d="M5 9Q1 20 11 27q8 4 16-3-5 7-13 6Q2 27 2 16q0-4 3-7z" fill="#f9b233" />
        </svg>
      </button>
      <button type="button" aria-label="Opera" className="flex w-[87px] justify-center">
        <svg width="30" height="32" viewBox="0 0 30 32">
          <ellipse cx="15" cy="16" rx="14.500" ry="15.500" fill="#d9141c" />
          <ellipse cx="15" cy="16" rx="5" ry="12.500" fill="#2a1510" />
          <path d="M3 9Q7 1 15 1q8 0 12 8-5-6-12-6T3 9z" fill="#f47b7b" opacity=".7" />
        </svg>
      </button>
      <div className="ml-[-11px] flex gap-1">
        <button type="button" aria-label="Chrome" className={`${RUN} border-[#a09480] bg-linear-to-br from-[#8b7f70] via-[#54473a] to-[#3a2d20]`}>
          <svg width="30" height="30" viewBox="0 0 30 30">
            <circle cx="15" cy="15" r="14" fill="#f6cf2c" />
            <path d="M15 15L2.900 8A14 14 0 0 1 27.800 9.200H15z" fill="#dc3d30" />
            <path d="M15 15L2.900 8A14 14 0 0 0 14.500 29L20 18z" fill="#4fae46" />
            <circle cx="15" cy="15" r="6.500" fill="#f4f6f8" /><circle cx="15" cy="15" r="5" fill="#3a7fd0" />
          </svg>
        </button>
        <button type="button" aria-label="Průzkumník" className={`${RUN} border-[#a09480] bg-linear-to-br from-[#8b7f70] via-[#54473a] to-[#3a2d20]`}>
          <svg width="32" height="32" viewBox="0 0 32 32">
            <path d="M1 4h10l2 3h18v22H1z" fill="#e9cf79" /><path d="M4 2h8v5H4zM15 4h9v5h-9z" fill="#fff" />
            <path d="M4 2h3v2H4z" fill="#3d9c46" /><path d="M12 5h3v2h-3z" fill="#d84a35" /><path d="M20 5h3v2h-3z" fill="#3a84cf" />
            <path d="M1 9h30v19H1z" fill="#f8e8a6" stroke="#d8b95c" />
            <path d="M5 31v-8q0-3 3-3h17q3 0 3 3v8h-5v-5H10v5z" fill="#8ed0ee" stroke="#5aa6cd" />
          </svg>
        </button>
        <button type="button" aria-label="WinRAR" className={`${RUN} border-[#a09480] bg-linear-to-br from-[#8b7f70] via-[#54473a] to-[#3a2d20]`}>
          <svg width="32" height="28" viewBox="0 0 32 28">
            <path d="M1 2h26l4 4v4H5L1 7z" fill="#8d2a6e" /><path d="M1 10l4 2h26v6H5l-4-3z" fill="#2b50c4" /><path d="M1 18l4 2h26v6H5l-4-3z" fill="#26953a" />
            <path d="M1 3l4 4v3L1 8zM1 11l4 3v3l-4-2zM1 19l4 3v3l-4-2z" fill="#efeae0" />
            <path d="M5 11h26M5 19h26M5 27h26" stroke="#161616" />
            <path d="M18 2h5v24h-5z" fill="#a9742d" /><path d="M19 11h3v6h-3z" fill="#f4e4b0" stroke="#333" />
          </svg>
        </button>
        <button type="button" aria-label="Word" className={`${RUN} border-[#e5e0d8] bg-linear-to-br from-[#d8d3cc] via-[#a89f95] to-[#8d8378]`}>
          <svg width="32" height="32" viewBox="0 0 32 32">
            <path d="M1 29V12Q2 2 12 1.500h13l-1 5H12q-4 1-5 6l-1 17z" fill="#dfe9f8" stroke="#4c75b8" />
            <path d="M9 4h22l-2 27-22-3z" fill="#fdfeff" stroke="#8da2c4" />
            <text x="11" y="18" fontSize="13" fontWeight="bold" fontStyle="italic" fontFamily="Liberation Serif" fill="#2c559f">W</text>
            <path d="M24 9h5M24 12h5M24 15h4M11 21h17M11 24h16M11 27h10" stroke="#4c75b8" strokeWidth="1.500" />
          </svg>
        </button>
      </div>
      <div className="ml-auto flex h-full items-center">
        <span className="pb-1 text-[12px]">SK</span>
        <button type="button" aria-label="Zobrazit skryté ikony" className="ml-4">
          <svg width="7" height="4" viewBox="0 0 7 4" fill="#fff"><path d="M3.500 0L7 4H0z" /></svg>
        </button>
        <svg width="16" height="16" viewBox="0 0 16 16" className="ml-[13px]" fill="#fff"><path d="M1 1h1.500v14H1zM3 2q3-1 5 1v6q-2-2-5-1zM9 4q2 1 6 0l-2 3 1 2q-3 1-5 0z" /></svg>
        <svg width="16" height="16" viewBox="0 0 16 16" className="ml-2" fill="#fff">
          <path d="M4 1h5v1H5v8H2V3zM9 3h2V1h1v2h1V1h1v2h1v4q-1 3-3 3v5h-2v-5q-2 0-2-3z" />
          <path d="M1 7h9v8H1z" fill="#c31818" /><path d="M3 9l5 5M8 9l-5 5" stroke="#4d0505" strokeWidth="1.500" />
        </svg>
        <svg width="16" height="16" viewBox="0 0 16 16" className="ml-[9px]" fill="none" stroke="#fff">
          <path d="M4.500 4.500h10v8h-8M8 14.500h5" strokeWidth="1.500" /><path d="M1 1v3q0 2 2 2t2-2V1M3 1v13h4" />
        </svg>
        <svg width="14" height="14" viewBox="0 0 14 14" className="ml-[10px]" fill="#fff">
          <path d="M0 4.500h3L7 0v14L3 9.500H0z" /><path d="M10 4q2 3 0 6" fill="none" stroke="#fff" />
        </svg>
        <time dateTime="2012-02-01T17:23" className="ml-[17px] w-[49px] text-center text-[11px] leading-[17px] whitespace-nowrap">
          17:23<br />1. 2. 2012
        </time>
        <button type="button" aria-label="Zobrazit plochu" className="ml-[11px] h-full w-[14px] border border-[#8b8273] bg-linear-to-b from-[#6d6254] to-[#2b2015]" />
      </div>
    </div>
  );
}

export default function App() {
  return (
    <div className={`relative flex h-screen flex-col overflow-hidden whitespace-nowrap ${UI}`}>
      <OfficeButton />
      <TitleBar />
      <TabRow />
      <Ribbon />
      <Workspace />
      <StatusBar />
      <TaskBar />
    </div>
  );
}
